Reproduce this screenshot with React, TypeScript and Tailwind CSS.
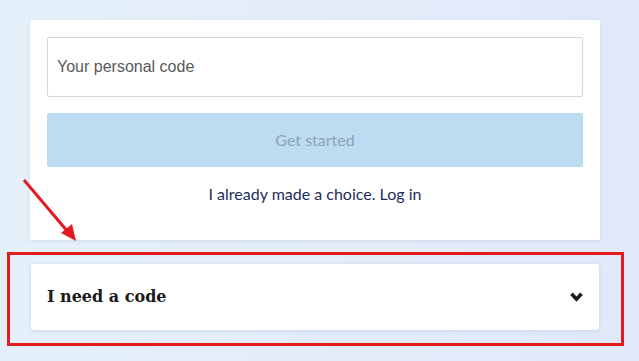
import React from 'react';

const lato = { fontFamily: 'Lato, "Open Sans", sans-serif' };

function Chevron() {
    return (
        <svg width="13" height="10" viewBox="0 0 13 10" fill="none">
            <path d="M1.5 1.8 L6.5 7.2 L11.5 1.8" stroke="#1b1b24" strokeWidth="3.6" strokeLinejoin="miter" />
        </svg>
    );
}

export default function App() {
    return (
        <div className="relative w-[639px] h-[361px] overflow-hidden bg-gradient-to-r from-[#e5f1fa] to-[#e1e9f9] pl-[30px] pt-[20px]">
            {/* Login card */}
            <div className="w-[570px] bg-white rounded-[2px] shadow-[0_1px_4px_rgba(120,140,170,0.18)] px-[17px] pt-[17px] pb-[36px]">
                <input
                    className="w-full h-[60px] border border-[#d6d6d6] rounded-[2px] pl-[9px] text-[16px] text-[#444] placeholder:text-[#595959] outline-none"
                    style={{ fontFamily: '"Liberation Sans", Arial, sans-serif' }}
                    placeholder="Your personal code"
                />
                <button
                    className="mt-[16px] w-full h-[54px] bg-[#bcdcf2] rounded-[2px] text-[16px] text-[#8fa2b7]"
                    style={lato}
                >
                    Get started
                </button>
                <p className="mt-[17px] text-center text-[16px] leading-[20px] text-[#1c2d5c]" style={lato}>
                    I already made a choice. Log in
                </p>
            </div>

            {/* Collapsed section */}
            <div className="ml-[1px] mt-[24px] w-[568px] h-[66px] bg-white rounded-[3px] shadow-[0_1px_4px_rgba(120,140,170,0.22)] flex items-center justify-between pl-[16px] pr-[16px]">
                <span
                    className="text-[16px] font-bold text-[#1a1a1a]"
                    style={{ fontFamily: '"DejaVu Serif", serif' }}
                >
                    I need a code
                </span>
                <Chevron />
            </div>

            {/* Annotation overlay */}
            <div className="absolute left-[7px] top-[252px] w-[617px] h-[94px] border-[3px] border-[#e31b1f]" />
            <svg className="absolute left-0 top-0 pointer-events-none" width="639" height="361">
                <line x1="24" y1="180" x2="68" y2="232" stroke="#e31b1f" strokeWidth="3" />
                <polygon points="76,241 61,233 72,224" fill="#e31b1f" />
            </svg>
        </div>
    );
}
